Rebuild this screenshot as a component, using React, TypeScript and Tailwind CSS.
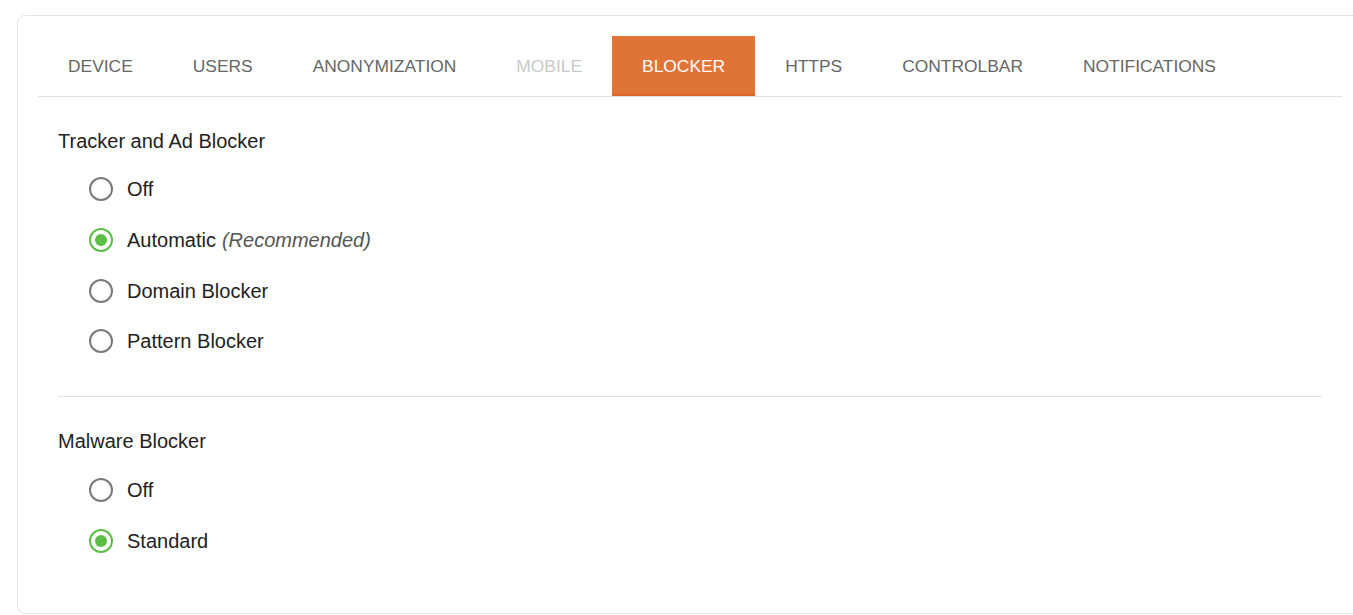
const tabs = [
  { label: 'DEVICE' },
  { label: 'USERS' },
  { label: 'ANONYMIZATION' },
  { label: 'MOBILE', disabled: true },
  { label: 'BLOCKER', active: true },
  { label: 'HTTPS' },
  { label: 'CONTROLBAR' },
  { label: 'NOTIFICATIONS' },
]

interface Option {
  label: string
  note?: string
  checked?: boolean
}

const sections: Array<{ title: string; options: Option[] }> = [
  {
    title: 'Tracker and Ad Blocker',
    options: [
      { label: 'Off' },
      { label: 'Automatic', note: '(Recommended)', checked: true },
      { label: 'Domain Blocker' },
      { label: 'Pattern Blocker' },
    ],
  },
  {
    title: 'Malware Blocker',
    options: [{ label: 'Off' }, { label: 'Standard', checked: true }],
  },
]

function Radio({ checked }: { checked?: boolean }) {
  return (
    <span
      className={
        checked
          ? 'flex h-6 w-6 items-center justify-center rounded-full border-2 border-[#5cbf45]'
          : 'flex h-6 w-6 items-center justify-center rounded-full border-2 border-[#7a7a7a]'
      }
    >
      {checked && <span className="h-3 w-3 rounded-full bg-[#5cbf45]" />}
    </span>
  )
}

export default function App() {
  return (
    <div className="h-[615px] w-[1353px] overflow-hidden bg-white font-['Liberation_Sans',Arial,sans-serif]">
      <div className="ml-[17px] mt-[15px] w-[1346px] rounded-lg border border-[#e4e4e4] px-5 pt-5 pb-[47px]">
        <nav className="flex border-b border-[#e0e0e0]">
          {tabs.map((tab) => (
            <div
              key={tab.label}
              className={
                tab.active
                  ? 'flex h-[60px] items-center border-b-2 border-[#d9652b] bg-[#e07437] px-[30px] pt-[2px] text-[17.4px] text-white'
                  : tab.disabled
                    ? 'flex h-[60px] items-center px-[30px] text-[17.4px] text-[#c9c9c9]'
                    : 'flex h-[60px] items-center px-[30px] text-[17.4px] text-[#666]'
              }
            >
              {tab.label}
            </div>
          ))}
        </nav>

        <div className="px-5">
          {sections.map((section, i) => (
            <section
              key={section.title}
              className={i === 0 ? 'border-b border-[#e0e0e0] pt-8 pb-[29px]' : 'pt-8'}
            >
              <h3 className="text-[20px] leading-6 text-[#222]">{section.title}</h3>
              <ul className={i === 0 ? 'mt-[11px] pl-[31px]' : 'mt-[12px] pl-[31px]'}>
                {section.options.map((opt) => (
                  <li key={opt.label} className="flex h-[50.7px] items-center gap-[14px]">
                    <Radio checked={opt.checked} />
                    <span className="text-[20px] text-[#222]">
                      {opt.label}
                      {opt.note && <em className="ml-[6px] text-[#555]">{opt.note}</em>}
                    </span>
                  </li>
                ))}
              </ul>
            </section>
          ))}
        </div>
      </div>
    </div>
  )
}
